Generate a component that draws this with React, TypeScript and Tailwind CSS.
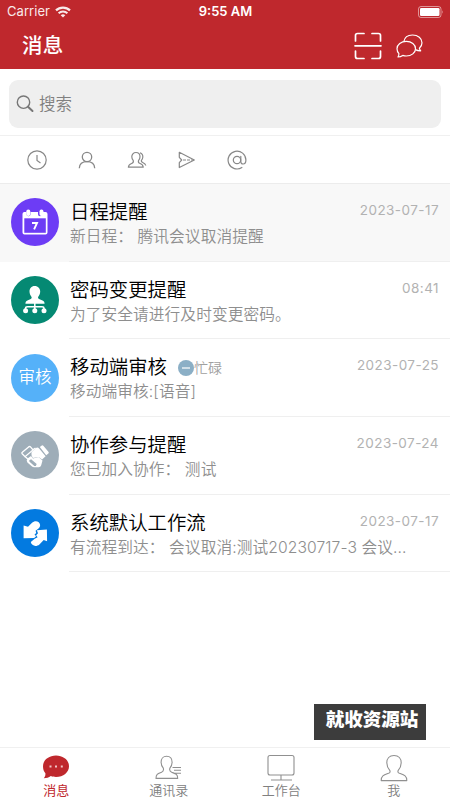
import React from "react";
import clsx from "clsx";

const CalendarIcon = () => (
  <svg className="size-12" viewBox="0 0 48 48">
    <path
      fill="white"
      d="M13 14h2.5v2.2a2 2 0 0 0 4 0V14h7.5v2.2a2 2 0 0 0 4 0V14H34.500a2 2 0 0 1 2 2v18.500a2 2 0 0 1-2 2h-21a2 2 0 0 1-2-2V16a2 2 0 0 1 1.500-2z"
    />
    <path className="fill-[#6d3cf5]" d="M13.300 20.300h21.500v14.500H13.300z" />
    <rect x="15.300" y="11.500" width="4" height="6.500" rx="1.900" fill="white" />
    <rect x="28.500" y="11.500" width="4" height="6.500" rx="1.900" fill="white" />
    <path
      d="M21 25h5l-2.900 6.400"
      fill="none"
      stroke="white"
      strokeWidth="1.900"
    />
  </svg>
);

const OrgIcon = () => (
  <svg className="size-12" viewBox="0 0 48 48" fill="white">
    <path d="M23.700 10c3.400 0 5.500 2.600 5.500 5.600 0 2.300-.9 4-2.100 5.500-.3 1.200.4 1.900 2 2.400 2.800.8 4.500 1.700 4.500 4.200H14.400c0-2.500 1.700-3.400 4.300-4.200 1.600-.5 2.200-1.200 1.900-2.400-1.200-1.500-2.100-3.200-2.100-5.500 0-3 1.800-5.600 5.200-5.600z" />
    <path
      d="M23.800 27v7M14.500 34v-1.500q0-1.700 2-1.700h14.500q2 0 2 1.700V34"
      fill="none"
      stroke="white"
      strokeWidth="1.500"
    />
    <circle cx="14.600" cy="34.800" r="2.500" />
    <circle cx="23.800" cy="34.800" r="2.500" />
    <circle cx="33" cy="34.800" r="2.500" />
  </svg>
);

const HandshakeIcon = () => (
  <svg className="size-12" viewBox="0 0 48 48" fill="white">
    <path
      d="M11.300 21.300l6.300-5.400q1.200-.8 2.100.2l2.300 2.800-8 6.800-2.800-3q-.7-.8.100-1.400z"
      fill="none"
      stroke="white"
      strokeWidth="1.300"
    />
    <path
      d="M14 25.500l2.800 2.500M21.500 19l3-2"
      fill="none"
      stroke="white"
      strokeWidth="1.300"
    />
    <path d="M20.500 21.300l4.300-4.200q1.800-1.200 3.300.3l6.500 7.800-3.500 3.200-3.500-2.500-5.800 1-1.300-2.600z" />
    <path d="M28.800 16l2-1.500q.9-.5 1.500.3l5.300 6.200q.5.800-.2 1.500l-2.200 1.800z" />
    <path d="M16.500 27.500l3.500-2.400 2 2.300 5.500-1.400 4 3.600-1.300 4.700q-.6 2-2.500 2h-4.500q-1.500 0-2.500-1l-4.300-3.700q-1.500-2.300.1-4.100z" />
    <path
      d="M18.300 29.200l1.800-1 5.600 4.800-.9 1.900h-1.500l-5-4.300z"
      className="fill-[#9eadb8]"
    />
  </svg>
);

const FlowIcon = () => (
  <svg className="size-12" viewBox="0 0 48 48" fill="white">
    <path d="M12.600 16.400l4.400 1.400 3.800-3.900c3.200-3.100 8-1.800 8.300 2 .1 1.400-.6 2.500-1.600 3.500l-2.900 2.300.6 2.200-1.700 1.500 1.600 1.900-2 1.700-10.500.300z" />
    <path d="M25.800 21.300l10.100-.9.200 11.800-3.400-1.200-4.300 4.400c-3.400 2.800-7.800 1.400-8.600-2.400l3.900-3.200 2.900-1.600-1.500-2 1.900-1.900z" />
  </svg>
);

const items = [
  {
    title: "日程提醒",
    text: "新日程： 腾讯会议取消提醒",
    time: "2023-07-17",
    bg: "bg-[#6d3cf5]",
    icon: <CalendarIcon />,
    active: true,
  },
  {
    title: "密码变更提醒",
    text: "为了安全请进行及时变更密码。",
    time: "08:41",
    bg: "bg-[#058973]",
    icon: <OrgIcon />,
  },
  {
    title: "移动端审核",
    text: "移动端审核:[语音]",
    time: "2023-07-25",
    bg: "bg-[#55b1f9]",
    icon: <span className="text-[16.500px] font-[350] text-white">审核</span>,
    status: "忙碌",
  },
  {
    title: "协作参与提醒",
    text: "您已加入协作： 测试",
    time: "2023-07-24",
    bg: "bg-[#9eadb8]",
    icon: <HandshakeIcon />,
  },
  {
    title: "系统默认工作流",
    text: "有流程到达： 会议取消:测试20230717-3 会议...",
    time: "2023-07-17",
    bg: "bg-[#037ae0]",
    icon: <FlowIcon />,
  },
];

const Header = () => (
  <header className="h-[69px] bg-[#bf282d] text-white">
    <div className="grid h-[23px] grid-cols-3 items-center pl-[7px] pr-1.5">
      <div className="flex items-center gap-[5px] text-[13px] tracking-[0.05px] opacity-90">
        Carrier
        <svg className="h-3 w-4" viewBox="0 0 16 12" fill="none" stroke="white">
          <path d="M1 4.400a10 10 0 0 1 14 0" strokeWidth="2.200" />
          <path d="M3.600 7.300a6.300 6.300 0 0 1 8.800 0" strokeWidth="2" />
          <path d="M8 11.500L5.700 9.300a3.400 3.400 0 0 1 4.600 0z" fill="white" stroke="none" />
        </svg>
      </div>
      <div className="text-center text-[13px] font-semibold">9:55 AM</div>
      <svg className="ml-auto h-3 w-[26px]" viewBox="0 0 26 12">
        <rect x=".5" y=".5" width="22.500" height="11" rx="2.500" fill="none" stroke="white" strokeOpacity=".5" />
        <rect x="2" y="2" width="19.500" height="8" rx="1.300" fill="white" />
        <path d="M24.200 4.200q1.400 1.800 0 3.600z" fill="white" fillOpacity=".6" />
      </svg>
    </div>
    <div className="flex h-[46px] items-center pl-[22px] pr-[27px]">
      <h1 className="pt-px text-[20.500px] font-medium tracking-[0.3px]">消息</h1>
      <svg
        className="ml-auto h-7 w-7"
        viewBox="0 0 28 28"
        fill="none"
        stroke="white"
        strokeWidth="1.700"
        strokeLinecap="round"
      >
        <path d="M1.500 9V3.500q0-2 2-2H10M18 1.500h6.500q2 0 2 2V9M1.500 19v5.500q0 2 2 2H10M18 26.500h6.500q2 0 2-2V19M1 13.800h26" />
      </svg>
      <svg
        className="ml-3.5 h-[26px] w-[27px]"
        viewBox="0 0 27 26"
        fill="none"
        stroke="white"
        strokeWidth="1.200"
        strokeLinejoin="round"
      >
        <path d="M7.800 8.600C8.500 4.600 12 2 16.500 2 22 2 26 5.400 26 9.700c0 2.300-1.100 4.200-2.600 5.600.2 1 .7 1.700 1.300 2.500-1.900.1-3.600-.3-5.400-1.200" />
        <path d="M10.300 8.400c5.200 0 9.200 3.200 9.200 7.300s-4 7.300-9.200 7.300c-1.300 0-2.300-.2-3.500-.6-1.400 1-3 1.600-4.800 1.600.7-1.200 1-2 .9-3.400C1.700 19.200 1 17.600 1 15.700c0-4.100 4.100-7.300 9.300-7.300z" />
      </svg>
    </div>
  </header>
);

const Filters = () => (
  <div className="flex h-12 items-center gap-[30px] border-t border-[#f0f0f0] pl-[27px]">
    <svg className="size-5" viewBox="0 0 20 20" fill="none" stroke="#888" strokeWidth="1.200">
      <circle cx="10" cy="10" r="9.200" />
      <path d="M10 5v5.500l3.500 2.500" />
    </svg>
    <svg className="size-5" viewBox="0 0 20 20" fill="none" stroke="#888" strokeWidth="1.300">
      <circle cx="10" cy="7" r="4.700" />
      <path d="M2.300 18.200C2.500 14 5.700 11.700 10 11.700s7.500 2.300 7.700 6.500" />
    </svg>
    <svg className="size-5" viewBox="0 0 20 20" fill="none" stroke="#888" strokeWidth="1.200" strokeLinejoin="round">
      <path d="M9 2.500c2.700 0 4 2 4 4.300 0 1.600-.6 2.800-1.500 3.900-.5 1.600.1 2.300 1.600 2.800 2.100.8 3.100 1.500 3.100 3.700H1.400c0-2.200 1-2.900 3.200-3.700 1.500-.5 2.100-1.200 1.700-2.800-.9-1.100-1.500-2.300-1.500-3.900C4.800 4.500 6.300 2.500 9 2.500z" />
      <path d="M13 2.700c2.400.9 3 2.800 2.800 4.600-.1 1.500-.8 2.500-1.500 3.400-.2 1 .4 1.400 1.400 1.800 1.600.7 2.800 1.400 3.100 3" />
    </svg>
    <svg className="size-5" viewBox="0 0 20 20" fill="none" stroke="#888" strokeWidth="1.200" strokeLinejoin="round">
      <path d="M2.300 2.300L17.300 10 2.300 17.500v-4.900L4.700 10 2.300 7.300z" />
      <path d="M6 10h11" strokeDasharray="3 1" />
    </svg>
    <svg className="size-5" viewBox="0 0 20 20" fill="none" stroke="#888" strokeWidth="1.200" strokeLinecap="round">
      <circle cx="10" cy="10" r="3.700" />
      <path d="M13.800 6.300v5.200c0 1.600.9 2.500 2.300 2.500 1.800 0 2.800-1.700 2.800-4a8.900 8.900 0 1 0-4 7.500" />
    </svg>
  </div>
);

const tabs = [
  {
    label: "消息",
    icon: (
      <>
        <path
          d="M14 1.500c7.300 0 13 4.600 13 10.700s-5.700 10.700-13 10.700c-2 0-3.400-.2-5.200-.8-2 1.400-4.300 2.200-7 2.200 1.200-1.500 1.800-2.800 1.600-5C1.800 17.400 1 15 1 12.200 1 6.100 6.700 1.500 14 1.500z"
          fill="#bf282d"
          stroke="none"
        />
        <path d="M7.500 12.500h2M13 12.500h2M18.800 12.500h2" stroke="#f0c5c7" strokeWidth="1.800" />
      </>
    ),
  },
  {
    label: "通讯录",
    icon: (
      <path d="M11.600 2.200c3.700 0 5.500 2.800 5.500 6 0 2.500-.8 4.200-2.200 6-.8 2.200-.1 3.300 2.200 4.200 3.500 1.300 5.600 1.800 5.600 6H1c0-4.200 1.700-4.700 5.200-6 2.300-.9 2.800-2 2.100-4.200-1.400-1.800-2.200-3.500-2.200-6 0-3.200 1.800-6 5.500-6zM17.500 13.500H26M19 16.300h7M20 19.200h6" />
    ),
  },
  {
    label: "工作台",
    icon: (
      <>
        <rect x="1" y="1.500" width="26" height="19.500" rx="2" />
        <path d="M14 21v5M4 26h21" />
      </>
    ),
  },
  {
    label: "我",
    icon: (
      <path d="M14 1.500c4.700 0 7.200 3.200 7.200 7.300 0 3-1.100 5.500-3.100 7.900-.6 1.600.2 2.200 2.100 2.900 4.300 1.500 6.600 2.400 6.600 7H1.200c0-4.600 2.300-5.500 6.600-7 1.900-.7 2.700-1.300 2.100-2.900-2-2.400-3.100-4.900-3.100-7.900 0-4.100 2.500-7.300 7.200-7.300z" />
    ),
  },
];

const TabBar = () => (
  <nav className="grid h-[53px] grid-cols-4 border-t border-[#f0f0f0]">
    {tabs.map((tab, i) => (
      <div key={tab.label} className="flex flex-col items-center pt-1.5">
        <svg
          className="size-7 shrink-0"
          viewBox="0 0 28 28"
          fill="none"
          stroke="#909090"
          strokeWidth="1.100"
          strokeLinejoin="round"
        >
          {tab.icon}
        </svg>
        <span
          className={clsx(
            "text-[13px] leading-[17px]",
            i === 0 ? "text-[#bf282d]" : "font-[350] text-[#808080]"
          )}
        >
          {tab.label}
        </span>
      </div>
    ))}
  </nav>
);

export default function App() {
  return (
    <div className="relative flex h-[800px] w-[450px] flex-col overflow-hidden bg-white font-['Inter','Noto_Sans_CJK_SC',sans-serif]">
      <Header />
      <div className="px-[9px] pb-[7px] pt-[11px]">
        <div className="flex h-12 items-center gap-[5px] rounded-[9px] bg-[#efefef] pl-[7px] text-[16.500px] font-[350] text-[#808080]">
          <svg className="size-[18px]" viewBox="0 0 18 18" fill="none" stroke="#777" strokeWidth="1.400" strokeLinecap="round">
            <circle cx="7.500" cy="7.200" r="6.200" />
            <path d="M12 11.700l4.500 4.300" strokeWidth="2" />
          </svg>
          <span className="pt-px">搜索</span>
        </div>
      </div>
      <Filters />
      <main className="flex-1 border-t border-[#ececec]">
        {items.map((item) => (
          <div
            key={item.title}
            className={clsx(
              "flex h-[77.7px] items-center pl-[11px]",
              item.active && "bg-[#f8f8f8]"
            )}
          >
            <div
              className={clsx(
                "mb-px flex size-12 shrink-0 items-center justify-center rounded-full",
                item.bg
              )}
            >
              {item.icon}
            </div>
            <div className="ml-2.5 h-full flex-1 border-b border-[#efefef] pr-[11px] pt-4">
              <div className="flex h-[25px] items-center">
                <span className="pl-px text-[19.400px] font-[350] text-black">
                  {item.title}
                </span>
                {item.status && (
                  <span className="ml-[11px] flex items-center text-[14px] font-[350] text-[#a0a0a0]">
                    <svg className="size-4" viewBox="0 0 16 16">
                      <circle cx="8" cy="8" r="8" fill="#8bafc6" />
                      <path d="M4 8h8" stroke="white" strokeWidth="1.200" />
                    </svg>
                    {item.status}
                  </span>
                )}
                <span className="ml-auto pb-[5px] text-[13.500px] tracking-[0.45px] text-[#b2b2b2]">
                  {item.time}
                </span>
              </div>
              <p className="whitespace-pre pl-px text-[15.700px] font-[350] leading-6 tracking-[0.08px] text-[#8e8e8e]">
                {item.text}
              </p>
            </div>
          </div>
        ))}
      </main>
      <TabBar />
      <div className="absolute left-[314px] top-[704px] flex h-9 w-28 justify-center bg-[#3c3c3c] pl-1 pt-[3px] text-[18.500px] font-black leading-[25px] text-white">
        就收资源站
      </div>
    </div>
  );
}
